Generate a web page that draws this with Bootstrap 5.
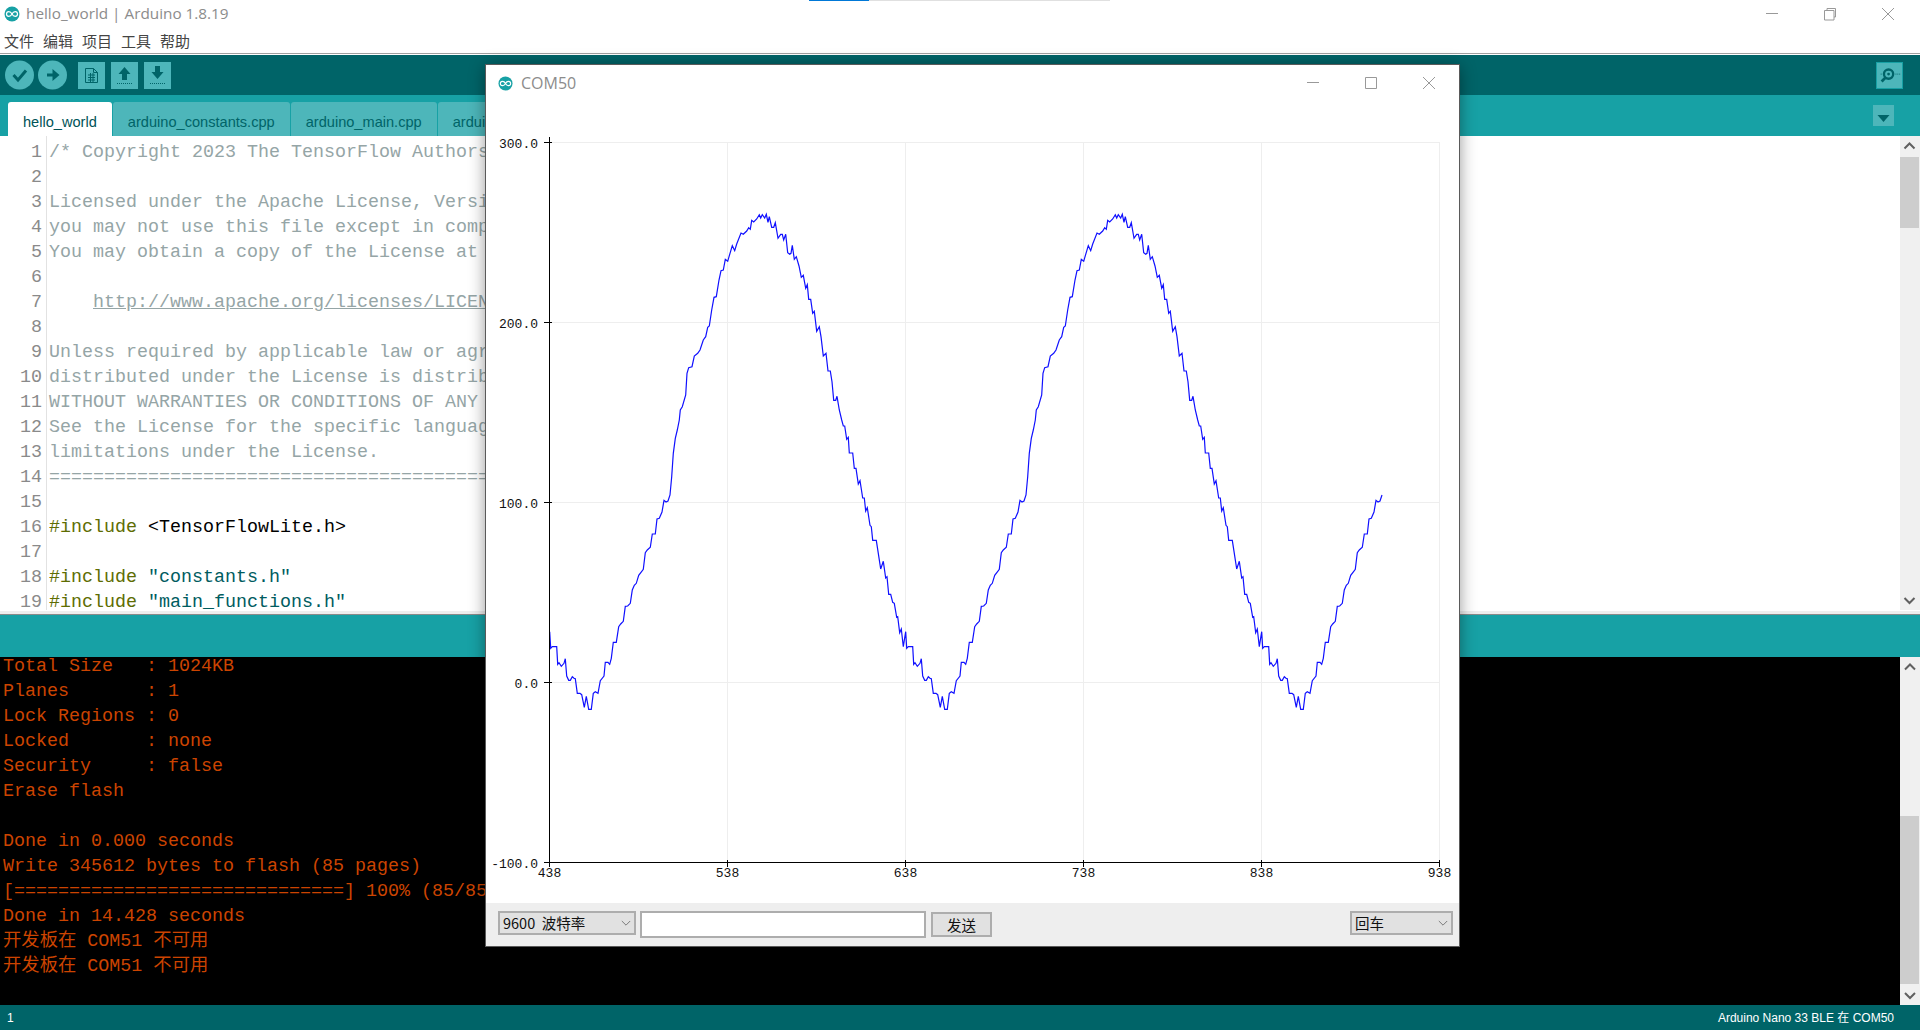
<!DOCTYPE html>
<html lang="zh">

<head>
    <meta charset="UTF-8">
    <meta name="viewport" content="width=device-width, initial-scale=1.0">
    <title>hello_world | Arduino 1.8.19</title>
    <link href="https://cdn.jsdelivr.net/npm/bootstrap@5.3.0/dist/css/bootstrap.min.css" rel="stylesheet">
    <style>
        body,
        html {
            margin: 0;
            padding: 0;
            height: 1030px;
            overflow: hidden;
            background-color: #fff;
            font-family: "Liberation Sans", "Noto Sans CJK SC", sans-serif;
        }

        .ide-app {
            height: 1030px;
        }

        /* Windows 标题栏 */
        .ide-title {
            height: 30px;
            padding-bottom: 3px;
            font-family: "Open Sans", "Noto Sans", sans-serif;
            font-size: 15.300px;
            color: #8c8c8c;
        }

        .ide-title span {
            margin-left: 6px;
        }

        .win-progress {
            position: absolute;
            top: 0;
            left: 809px;
            width: 301px;
            height: 1px;
            background-color: #e0e0e0;
        }

        .win-progress i {
            display: block;
            width: 60px;
            height: 1px;
            background-color: #0078d7;
        }

        .win-btns {
            position: absolute;
            top: 0;
            right: 26px;
            display: flex;
            gap: 46px;
        }

        .ide-menu {
            height: 24px;
            padding-left: 4px;
            gap: 9px;
            font-family: "Noto Sans CJK SC", sans-serif;
            font-size: 15px;
            color: #444;
            border-bottom: 1px solid #a0a0a0;
        }

        .ide-menu-gap {
            height: 1px;
        }

        .ide-toolbar {
            height: 40px;
            padding: 5px 17px 0 5px;
            background-color: #006468;
        }

        .tool-round {
            width: 29px;
            height: 30px;
            margin-right: 4px;
            flex: none;
        }

        .tool-square {
            width: 27px;
            height: 27px;
            margin: 2px 6px 0 0;
            flex: none;
            background-color: #4db6ba;
        }

        .tool-first {
            margin-left: 7px;
        }

        .tool-serial {
            border: 1px solid #17a1a5;
            margin-right: 0;
        }

        .ide-tabbar {
            height: 41px;
            padding: 7px 26px 0 8px;
            background-color: #17a1a5;
            border: 0;
            gap: 1px;
        }

        .ide-tabbar .nav-link {
            height: 34px;
            padding: 10px 15px 0;
            margin: 0;
            border: 0;
            border-radius: 3px 3px 0 0;
            font-size: 14.600px;
            line-height: 20px;
            background-color: #4db6ba;
            color: #006468;
        }

        .ide-tabbar .nav-link.active {
            background-color: #fff;
            color: #005357;
        }

        .tab-menu {
            width: 21px;
            height: 21px;
            margin: 3px 0 0 auto;
            background-color: #4db6ba;
        }

        /* 编辑区 */
        .ide-editor {
            height: 474px;
            overflow: hidden;
        }

        .ide-gutter,
        .ide-code,
        .ide-console {
            margin: 0;
            overflow: hidden;
            font-family: "Liberation Mono", "Noto Sans CJK SC", monospace;
            font-size: 18.330px;
            line-height: 25px;
        }

        .ide-gutter {
            flex: none;
            width: 47px;
            padding: 4px 4px 0 0;
            text-align: right;
            color: #8a8a8a;
            border-right: 1px solid #e2e2e2;
        }

        .ide-code {
            padding: 4px 0 0 2px;
            color: #000;
            flex-grow: 1;
        }

        .c-note {
            color: #95a5a6;
        }

        .c-link {
            color: #95a5a6;
            text-decoration: underline;
        }

        .c-key {
            color: #5e6d03;
        }

        .c-str {
            color: #005c5f;
        }

        .ide-scroll {
            flex: none;
            width: 20px;
            background-color: #f0f0f0;
        }

        .ide-scroll svg {
            display: block;
            flex: none;
        }

        .scroll-thumb {
            background-color: #cdcdcd;
            margin-right: 1px;
        }

        .editor-thumb {
            height: 71px;
            margin-bottom: auto;
        }

        .console-thumb {
            height: 168px;
            margin-top: auto;
        }

        .ide-split {
            height: 5px;
            background-color: #eee;
            border-top: 1px solid #fff;
            border-bottom: 1px solid #8a8a8a;
        }

        .ide-notice {
            height: 42px;
            background-color: #17a1a5;
        }

        .ide-output {
            height: 348px;
            background-color: #000;
            overflow: hidden;
        }

        .ide-console {
            flex-grow: 1;
            margin-top: -3px;
            padding-left: 3px;
            color: #cc4400;
        }

        .ide-status {
            height: 25px;
            padding: 0 26px 0 7px;
            background-color: #006468;
            color: #fff;
            font-size: 12px;
        }

        /* 串口绘图器窗口 */
        .plot-window {
            position: absolute;
            left: 486px;
            top: 65px;
            width: 973px;
            height: 881px;
            background-color: #fff;
            box-shadow: 0 0 0 1px #5a5a5a, 0 2px 16px rgba(0, 0, 0, .45);
        }

        .plot-title {
            height: 40px;
            padding: 0 0 4px 12px;
            gap: 8px;
            font-family: "Open Sans", "Noto Sans", sans-serif;
            font-size: 16px;
            color: #8c8c8c;
        }

        .plot-btns {
            position: absolute;
            top: 0;
            right: 24px;
            display: flex;
            gap: 46px;
        }

        .plot-area {
            display: block;
            height: 798px;
        }

        .plot-area text {
            font-family: "Liberation Mono", monospace;
            font-size: 13px;
            fill: #111;
        }

        .plot-panel {
            height: 43px;
            padding: 8px 6px 0 12px;
            background-color: #eee;
            gap: 4px;
        }

        .plot-select {
            height: 24px;
            min-height: 0;
            padding: 0 0 0 3px;
            border: 2px solid #adadad;
            border-radius: 0;
            background-color: #e1e1e1;
            background-size: 10px 7px;
            background-position: right 3px center;
            background-image: url("data:image/svg+xml,%3csvg xmlns='http://www.w3.org/2000/svg' viewBox='0 0 12 8'%3e%3cpath fill='none' stroke='%23666' d='M1 1l5 5 5-5'/%3e%3c/svg%3e");
            font-family: "Noto Sans CJK SC", sans-serif;
            font-size: 14.500px;
            line-height: 20px;
            color: #111;
        }

        .baud-select {
            width: 138px;
        }

        .ending-select {
            width: 103px;
            margin-left: auto;
        }

        .plot-input {
            width: 286px;
            height: 27px;
            min-height: 0;
            padding: 0 4px;
            border: 2px solid #adadad;
            border-radius: 0;
        }

        .plot-send {
            width: 61px;
            height: 25px;
            margin: 1px 0 0 1px;
            padding: 0;
            border: 2px solid #adadad;
            border-radius: 0;
            background-color: #e1e1e1;
            font-family: "Noto Sans CJK SC", sans-serif;
            font-size: 14.500px;
            line-height: 20px;
            color: #111;
        }
    </style>
</head>

<body>
    <div class="ide-app d-flex flex-column">
        <div class="ide-title d-flex align-items-center ps-1">
            <svg width="16" height="16" viewBox="0 0 16 16">
                <circle cx="8" cy="8" r="7.500" fill="#17a1a5" />
                <path d="M8 8C7 6 6 5.700 4.800 5.700a2.300 2.300 0 0 0 0 4.600C6 10.300 7 10 8 8s2-2.300 3.200-2.300a2.300 2.300 0 0 1 0 4.600C10 10.300 9 10 8 8z" fill="none" stroke="#fff" stroke-width="1.200" />
            </svg>
            <span>hello_world | Arduino 1.8.19</span>
        </div>
        <div class="win-progress"><i></i></div>
        <div class="win-btns">
            <svg width="12" height="28" viewBox="0 0 12 28"><path d="M0 13.500h12" stroke="#999" fill="none" /></svg>
            <svg width="12" height="28" viewBox="0 0 12 28"><path d="M.5 10.500h9.500v9.500H.5zM3 10.500V8.500h8.500V17H10" stroke="#999" fill="none" /></svg>
            <svg width="12" height="28" viewBox="0 0 12 28"><path d="M0 8l12 12M12 8L0 20" stroke="#999" fill="none" /></svg>
        </div>
        <div class="ide-menu d-flex align-items-center">
            <span>文件</span><span>编辑</span><span>项目</span><span>工具</span><span>帮助</span>
        </div>
        <div class="ide-menu-gap"></div>

        <div class="ide-toolbar d-flex align-items-start">
            <svg class="tool-round" viewBox="0 0 29 30">
                <circle cx="14.500" cy="15" r="14.500" fill="#4db6ba" />
                <path d="M8.500 15l4.500 5 8-9.500" fill="none" stroke="#006468" stroke-width="3" />
            </svg>
            <svg class="tool-round" viewBox="0 0 29 30">
                <circle cx="14.500" cy="15" r="14.500" fill="#4db6ba" />
                <path d="M9 13.500h5.500V9l7 6-7 6v-4.500H9z" fill="#006468" />
            </svg>
            <svg class="tool-square tool-first" viewBox="0 0 27 27">
                <path d="M7.500 6.500h8l4 4v10h-12zM15.500 6.500v4h4M10 13h7M10 15.500h7M10 18h7M12.500 11v9M15 11v9" fill="none" stroke="#006468" />
            </svg>
            <svg class="tool-square" viewBox="0 0 27 27">
                <path d="M13.500 5l6 7h-3.500v6h-5v-6H7.500z" fill="#006468" />
                <path d="M6 21.500h15" stroke="#006468" stroke-dasharray="1 1" />
            </svg>
            <svg class="tool-square" viewBox="0 0 27 27">
                <path d="M11 4h5v6h3.500l-6 7-6-7H11z" fill="#006468" />
                <path d="M6 21.500h15" stroke="#006468" stroke-dasharray="1 1" />
            </svg>
            <svg class="tool-square tool-serial ms-auto" viewBox="0 0 27 27">
                <circle cx="12.500" cy="12" r="5" fill="none" stroke="#006468" stroke-width="2.500" />
                <circle cx="12.500" cy="12" r="1.500" fill="#006468" />
                <path d="M9 16l-4 4" stroke="#006468" stroke-width="3" />
                <path d="M4 12h2M20 12h5" stroke="#006468" stroke-dasharray="1 1" />
            </svg>
        </div>

        <ul class="nav nav-tabs ide-tabbar">
            <li class="nav-item"><a class="nav-link active" href="#">hello_world</a></li>
            <li class="nav-item"><a class="nav-link" href="#">arduino_constants.cpp</a></li>
            <li class="nav-item"><a class="nav-link" href="#">arduino_main.cpp</a></li>
            <li class="nav-item"><a class="nav-link" href="#">arduino_output_handler.cpp</a></li>
            <li class="tab-menu">
                <svg width="21" height="21" viewBox="0 0 21 21"><path d="M4.500 8h12l-6 7z" fill="#006468" /></svg>
            </li>
        </ul>

        <div class="ide-editor d-flex">
            <pre class="ide-gutter">1
2
3
4
5
6
7
8
9
10
11
12
13
14
15
16
17
18
19
20</pre>
            <pre class="ide-code"><span class="c-note">/* Copyright 2023 The TensorFlow Authors. All Rights Reserved.

Licensed under the Apache License, Version 2.0 (the "License");
you may not use this file except in compliance with the License.
You may obtain a copy of the License at

    <span class="c-link">http://www.apache.org/licenses/LICENSE-2.0</span>

Unless required by applicable law or agreed to in writing, software
distributed under the License is distributed on an "AS IS" BASIS,
WITHOUT WARRANTIES OR CONDITIONS OF ANY KIND, either express or implied.
See the License for the specific language governing permissions and
limitations under the License.
==============================================================================*/</span>

<span class="c-key">#include</span> &lt;TensorFlowLite.h&gt;

<span class="c-key">#include</span> <span class="c-str">"constants.h"</span>
<span class="c-key">#include</span> <span class="c-str">"main_functions.h"</span>
<span class="c-key">#include</span> <span class="c-str">"model.h"</span></pre>
            <div class="ide-scroll d-flex flex-column">
                <svg width="19" height="21" viewBox="0 0 19 21"><path d="M4.500 12.500l5-5 5 5" fill="none" stroke="#606060" stroke-width="2" /></svg>
                <div class="scroll-thumb editor-thumb"></div>
                <svg width="19" height="21" viewBox="0 0 19 21"><path d="M4.500 9l5 5 5-5" fill="none" stroke="#606060" stroke-width="2" /></svg>
            </div>
        </div>
        <div class="ide-split"></div>
        <div class="ide-notice"></div>

        <div class="ide-output d-flex">
            <pre class="ide-console">Total Size   : 1024KB
Planes       : 1
Lock Regions : 0
Locked       : none
Security     : false
Erase flash

Done in 0.000 seconds
Write 345612 bytes to flash (85 pages)
[==============================] 100% (85/85 pages)
Done in 14.428 seconds
开发板在 COM51 不可用
开发板在 COM51 不可用</pre>
            <div class="ide-scroll d-flex flex-column">
                <svg width="19" height="21" viewBox="0 0 19 21"><path d="M5 12.500l5-5 5 5" fill="none" stroke="#606060" stroke-width="2" /></svg>
                <div class="scroll-thumb console-thumb"></div>
                <svg width="19" height="21" viewBox="0 0 19 21"><path d="M5 9l5 5 5-5" fill="none" stroke="#606060" stroke-width="2" /></svg>
            </div>
        </div>

        <div class="ide-status d-flex align-items-center justify-content-between">
            <span>1</span>
            <span>Arduino Nano 33 BLE 在 COM50</span>
        </div>
    </div>

    <div class="plot-window d-flex flex-column">
        <div class="plot-title d-flex align-items-center">
            <svg width="15" height="15" viewBox="0 0 16 16">
                <circle cx="8" cy="8" r="7.500" fill="#17a1a5" />
                <path d="M8 8C7 6 6 5.700 4.800 5.700a2.300 2.300 0 0 0 0 4.600C6 10.300 7 10 8 8s2-2.300 3.200-2.300a2.300 2.300 0 0 1 0 4.600C10 10.300 9 10 8 8z" fill="none" stroke="#fff" stroke-width="1.200" />
            </svg>
            <span>COM50</span>
            <div class="plot-btns">
                <svg width="12" height="36" viewBox="0 0 12 36"><path d="M0 17.500h12" stroke="#999" fill="none" /></svg>
                <svg width="12" height="36" viewBox="0 0 12 36"><path d="M.5 12.500h11v11H.5z" stroke="#999" fill="none" /></svg>
                <svg width="12" height="36" viewBox="0 0 12 36"><path d="M0 12l12 12M12 12L0 24" stroke="#999" fill="none" /></svg>
            </div>
        </div>

        <!-- 视图坐标与屏幕坐标一致，方便对照 -->
        <svg class="plot-area" width="973" height="798" viewBox="486 105 973 798">
            <g stroke="#eee" shape-rendering="crispEdges">
                <path d="M549 142.500H1440M549 322.500H1440M549 502.500H1440M549 682.500H1440" />
                <path d="M727.500 142V862M905.500 142V862M1083.500 142V862M1261.500 142V862M1439.500 142V862" />
            </g>
            <path id="plotLine" fill="none" stroke="#1010ff" stroke-width="1.200" />
            <g stroke="#000" shape-rendering="crispEdges">
                <path d="M549.500 137V863M549 862.500H1440" />
                <path d="M544 142.500h8M544 322.500h8M544 502.500h8M544 682.500h8M544 862.500h8" />
                <path d="M549.500 860v7M727.500 860v7M905.500 860v7M1083.500 860v7M1261.500 860v7M1439.500 860v7" />
            </g>
            <g text-anchor="end">
                <text x="538" y="148">300.0</text>
                <text x="538" y="328">200.0</text>
                <text x="538" y="508">100.0</text>
                <text x="538" y="688">0.0</text>
                <text x="538" y="868">-100.0</text>
            </g>
            <g text-anchor="middle">
                <text x="549.500" y="877">438</text>
                <text x="727.500" y="877">538</text>
                <text x="905.500" y="877">638</text>
                <text x="1083.500" y="877">738</text>
                <text x="1261.500" y="877">838</text>
                <text x="1439.500" y="877">938</text>
            </g>
        </svg>

        <div class="plot-panel d-flex align-items-start">
            <select class="form-select plot-select baud-select">
                <option>9600&nbsp;&nbsp;波特率</option>
            </select>
            <input type="text" class="form-control plot-input">
            <button type="button" class="btn plot-send">发送</button>
            <select class="form-select plot-select ending-select">
                <option>回车</option>
            </select>
        </div>
    </div>

    <script src="https://cdn.jsdelivr.net/npm/bootstrap@5.3.0/dist/js/bootstrap.bundle.min.js"></script>
    <script>
        // 一个周期的采样点，周期 356px，屏幕坐标
        const rise = [[29, 635], [32, 685], [37, 680], [50, 680], [53, 733], [57, 728], [64, 739], [72, 730], [76, 716], [80, 768], [86, 781], [91, 781], [97, 770], [102, 775], [106, 776], [112, 820], [120, 820], [125, 824], [133, 862], [139, 829], [146, 868], [154, 868], [160, 820], [166, 815], [174, 820], [181, 782], [192, 768], [196, 727], [204, 727], [209, 733], [214, 715], [220, 667], [229, 667], [236, 620], [242, 612], [250, 604], [256, 559], [263, 558], [271, 550], [277, 510], [283, 496], [289, 490], [296, 466], [303, 457], [310, 448], [316, 398], [322, 390], [331, 382], [337, 342], [346, 342], [351, 297], [358, 295], [366, 276], [372, 241], [378, 246], [384, 243], [390, 225], [395, 170], [400, 100], [406, 55], [412, 30], [418, 0]];
        const peak = [[421, 870], [427, 860], [437, 825], [441, 760], [446, 743], [456, 740], [463, 708], [473, 700], [480, 690], [490, 660], [497, 650], [503, 622], [508, 618], [515, 570], [522, 532], [529, 530], [537, 480], [543, 452], [550, 450], [556, 418], [563, 424], [570, 400], [577, 377], [584, 392], [590, 372], [603, 339], [610, 343], [620, 333], [626, 323], [631, 328], [635, 301], [641, 306], [650, 297], [658, 284], [662, 294], [667, 284], [674, 294], [679, 283], [684, 307], [688, 290], [695, 322], [701, 322], [706, 308], [714, 355], [722, 343], [727, 343], [731, 360], [737, 343], [743, 398], [749, 403], [753, 400], [757, 376], [763, 418], [769, 410], [777, 438], [784, 472], [790, 466], [797, 505], [802, 494], [806, 538], [812, 538], [818, 580], [823, 574], [830, 634], [838, 620], [843, 650], [850, 708], [858, 700], [864, 753], [871, 753], [876, 785], [881, 841], [887, 841], [891, 829], [898, 870], [905, 900]];
        const fallA = [[910, 18], [914, 18], [920, 58], [925, 52], [928, 99], [938, 99], [943, 145], [948, 145], [955, 192]];
        const fallB = [[0, 182], [8, 234], [13, 234], [17, 273], [22, 263], [30, 316], [34, 320], [38, 361], [49, 361], [55, 400], [62, 447], [70, 424], [77, 474], [81, 470], [86, 523], [92, 523], [98, 547], [103, 550], [110, 592], [113, 590], [119, 638], [124, 627], [130, 680]];

        const period = [
            ...rise.map(p => [540 + p[0] / 3, 420 + p[1] / 3]),
            ...peak.map(p => [540 + p[0] / 3, 120 + p[1] / 3]),
            ...fallA.map(p => [540 + p[0] / 3, 420 + p[1] / 3]),
            ...fallB.map(p => [860 + p[0] / 3, 420 + p[1] / 3])
        ];

        let points = [];
        for (let k = 0; k < 3; k++) {
            period.forEach(p => {
                const x = p[0] + k * 356;
                if (x <= 1382.5) points.push(x.toFixed(1) + ' ' + p[1].toFixed(1));
            });
        }
        document.getElementById('plotLine').setAttribute('d', 'M' + points.join('L'));
    </script>
</body>

</html>
